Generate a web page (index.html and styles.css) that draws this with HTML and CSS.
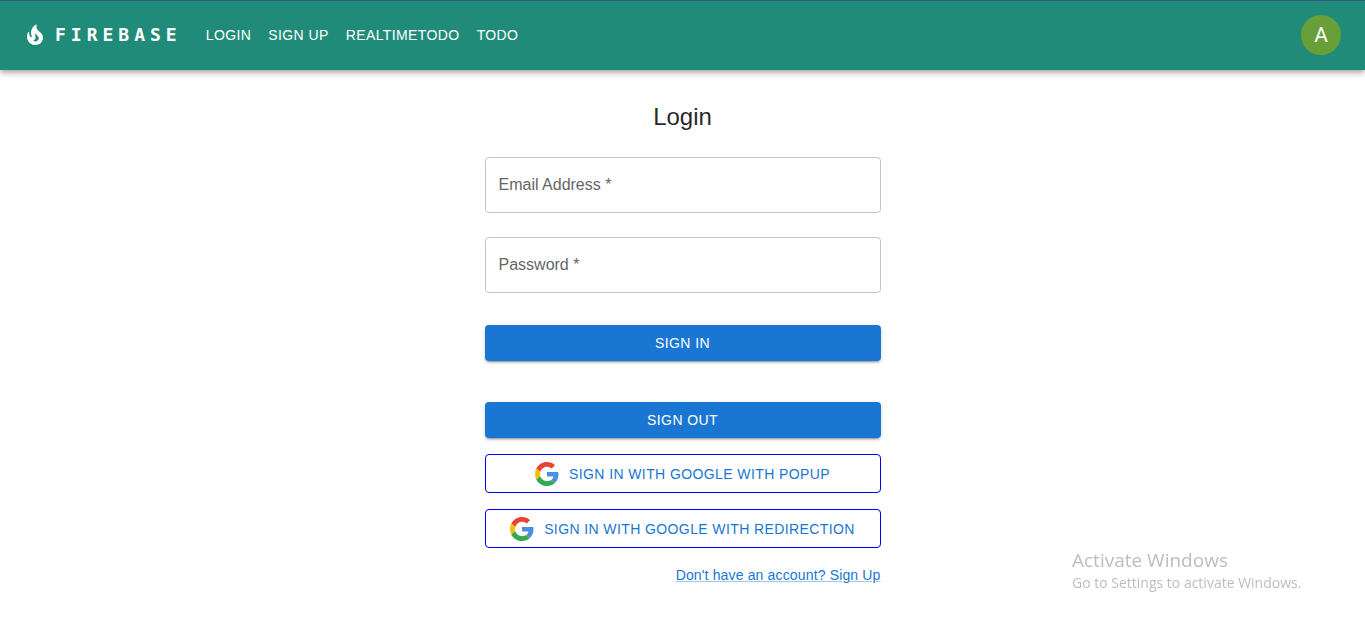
FILE: index.html
```html
<!DOCTYPE html>
<html lang="en">
<head>
<meta charset="utf-8">
<title>Login</title>
<meta name="viewport" content="width=device-width, initial-scale=1">
<link rel="stylesheet" href="styles.css">
</head>
<body>
<svg class="sprite" aria-hidden="true">
  <symbol id="google" viewBox="0 0 48 48">
    <path fill="#ea4335" d="M24 9.5c3.54 0 6.71 1.22 9.21 3.6l6.85-6.85C35.9 2.38 30.47 0 24 0 14.62 0 6.51 5.38 2.56 13.22l7.98 6.19C12.43 13.72 17.74 9.5 24 9.5z"/>
    <path fill="#4a90e2" d="M46.98 24.55c0-1.57-.15-3.09-.38-4.55H24v9.02h12.94c-.58 2.96-2.26 5.48-4.78 7.18l7.73 6c4.51-4.18 7.09-10.36 7.09-17.65z"/>
    <path fill="#fbbc05" d="M10.53 28.59c-.48-1.45-.76-2.99-.76-4.59s.27-3.14.76-4.59l-7.98-6.19C.92 16.46 0 20.12 0 24c0 3.88.92 7.54 2.56 10.78l7.97-6.19z"/>
    <path fill="#34a853" d="M24 48c6.48 0 11.93-2.13 15.89-5.81l-7.73-6c-2.15 1.45-4.92 2.3-8.16 2.3-6.26 0-11.57-4.22-13.47-9.91l-7.98 6.19C6.51 42.62 14.62 48 24 48z"/>
  </symbol>
</svg>

<header class="navbar">
  <a class="brand" href="#">
    <svg class="brand-icon" viewBox="0 0 24 24" aria-hidden="true"><path fill="currentColor" d="M19.48 12.35c-1.57-4.08-7.16-4.3-5.81-10.23.1-.44-.37-.78-.75-.55C9.29 3.71 6.68 8 8.87 13.62c.18.46-.36.89-.75.59-1.81-1.37-2-3.34-1.84-4.75.06-.52-.62-.77-.91-.34C4.69 10.16 4 11.84 4 14.37c.38 5.6 5.11 7.32 6.81 7.54 2.43.31 5.06-.14 6.95-1.87 2.08-1.93 2.84-5.01 1.72-7.69zM10.2 17.38c1.44-.35 2.18-1.39 2.38-2.31.33-1.43-.96-2.83-.09-5.09.33 1.87 3.27 3.04 3.27 5.08.08 2.53-2.66 4.7-5.56 2.32z"/></svg>
    <span class="brand-name">FIREBASE</span>
  </a>
  <nav class="nav-links">
    <a href="#">LOGIN</a>
    <a href="#">SIGN UP</a>
    <a href="#">REALTIMETODO</a>
    <a href="#">TODO</a>
  </nav>
  <button class="avatar" type="button" aria-label="Account">A</button>
</header>

<main class="login">
  <h1 class="title">Login</h1>
  <form class="form">
    <div class="field">
      <input id="email" type="email" placeholder=" " required>
      <label for="email">Email Address *</label>
    </div>
    <div class="field">
      <input id="password" type="password" placeholder=" " required>
      <label for="password">Password *</label>
    </div>
    <button class="btn btn-primary" type="submit">SIGN IN</button>
  </form>
  <div class="actions">
    <button class="btn btn-primary" type="button">SIGN OUT</button>
    <button class="btn btn-google" type="button"><svg class="google-icon" aria-hidden="true"><use href="#google"/></svg>SIGN IN WITH GOOGLE WITH POPUP</button>
    <button class="btn btn-google" type="button"><svg class="google-icon" aria-hidden="true"><use href="#google"/></svg>SIGN IN WITH GOOGLE WITH REDIRECTION</button>
    <a class="signup" href="#">Don't have an account? Sign Up</a>
  </div>
</main>

<aside class="watermark">
  <p class="watermark-title">Activate Windows</p>
  <p class="watermark-text">Go to Settings to activate Windows.</p>
</aside>
</body>
</html>
```

FILE: styles.css
```css
* { box-sizing: border-box; }

body {
  margin: 0;
  background: #fff;
  color: rgba(0, 0, 0, 0.87);
  font-family: "Liberation Sans", Arial, sans-serif;
}

.sprite { display: none; }

.navbar {
  display: flex;
  align-items: center;
  padding: 15px 24px 15px 23px;
  background: #218b7a;
  color: #fff;
  box-shadow: inset 0 1px #3a5a7c, 0 2px 4px -1px rgba(0, 0, 0, 0.2), 0 4px 5px rgba(0, 0, 0, 0.14), 0 1px 10px rgba(0, 0, 0, 0.12);
}

.brand {
  display: flex;
  align-items: center;
  gap: 8px;
  color: inherit;
  text-decoration: none;
}

.brand-icon { width: 24px; height: 24px; }

.brand-name {
  font: 700 18px/24px "DejaVu Sans Mono", monospace;
  letter-spacing: 5px;
}

.nav-links {
  display: flex;
  gap: 17px;
  margin-left: 24px;
  font-size: 14px;
  line-height: 24px;
  letter-spacing: 0.02857em;
}

.nav-links a { color: inherit; text-decoration: none; }

.avatar {
  width: 40px;
  height: 40px;
  margin-left: auto;
  padding: 0;
  border: 0;
  border-radius: 50%;
  background: #689f38;
  color: #fff;
  font: 21px/40px Roboto, sans-serif;
}

.login {
  display: flex;
  flex-direction: column;
  width: 100%;
  max-width: 396px;
  margin: 0 auto;
  padding-top: 31px;
}

.title {
  margin: 0 0 24px;
  font-size: 24px;
  font-weight: 400;
  line-height: 32px;
  text-align: center;
}

.form, .actions { display: flex; flex-direction: column; }

.field { position: relative; margin-bottom: 24px; }

.field input {
  display: block;
  width: 100%;
  height: 56px;
  padding: 16px 13px;
  border: 1px solid #c4c4c4;
  border-radius: 4px;
  background: none;
  font: inherit;
}

.field label {
  position: absolute;
  top: 16px;
  left: 14px;
  color: #666;
  font-size: 16px;
  line-height: 24px;
  pointer-events: none;
}

.field input:focus + label,
.field input:not(:placeholder-shown) + label {
  top: -8px;
  padding: 0 4px;
  background: #fff;
  font-size: 12px;
  line-height: 16px;
}

.btn {
  display: flex;
  align-items: center;
  justify-content: center;
  padding: 6px 16px;
  border: 0;
  border-radius: 4px;
  font: 14px/24px "Liberation Sans", Arial, sans-serif;
  letter-spacing: 0.02857em;
  cursor: pointer;
}

.btn-primary {
  background: #1976d2;
  color: #fff;
  box-shadow: 0 3px 1px -2px rgba(0, 0, 0, 0.2), 0 2px 2px rgba(0, 0, 0, 0.14), 0 1px 5px rgba(0, 0, 0, 0.12);
}

.form .btn { margin-top: 8px; }

.actions { gap: 16px; margin-top: 41px; }

.btn-google {
  gap: 10px;
  min-height: 39px;
  border: 1px solid #00f;
  background: #fff;
  color: #1976d2;
}

.google-icon { width: 24px; height: 24px; }

.signup {
  align-self: flex-end;
  color: #1976d2;
  font-size: 14px;
  line-height: 22px;
  letter-spacing: 0.01071em;
  text-decoration-color: rgba(25, 118, 210, 0.4);
}

.watermark {
  position: fixed;
  left: calc(100% - 293px);
  bottom: 33px;
  color: #bdbdbd;
  font-family: "Segoe UI", "Open Sans", sans-serif;
  white-space: nowrap;
  pointer-events: none;
}

.watermark p { margin: 0; }
.watermark-title { font-size: 19px; line-height: 26px; }
.watermark-text { font-size: 14px; line-height: 20px; }
```
